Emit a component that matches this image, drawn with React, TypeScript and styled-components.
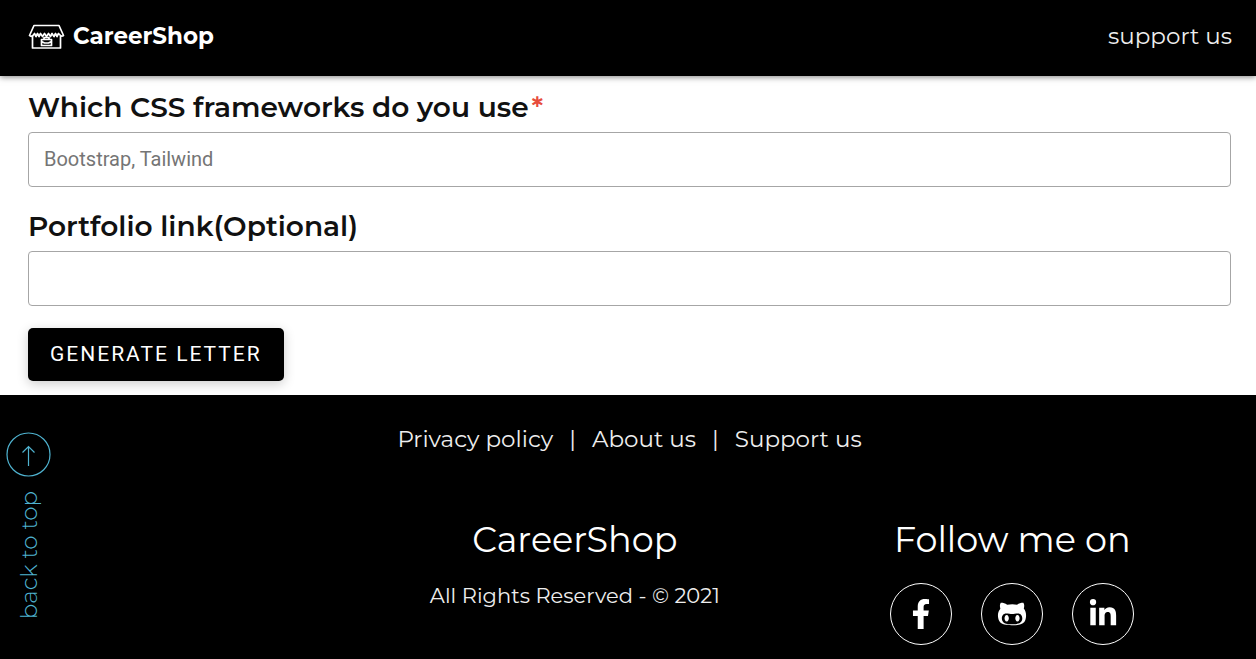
import React from "react";
import styled, { createGlobalStyle } from "styled-components";
import { FaFacebookF, FaGithubAlt, FaLinkedinIn } from "react-icons/fa";

const GlobalStyle = createGlobalStyle`
  *, *::before, *::after { box-sizing: border-box; }
  body {
    margin: 0;
    background: #fff;
    color: #111;
    font-family: Montserrat, Inter, "Open Sans", sans-serif;
  }
  a { color: inherit; text-decoration: none; }
`;

const Header = styled.header`
  position: relative;
  display: flex;
  align-items: center;
  justify-content: space-between;
  height: 76px;
  padding: 0 24px 4px 28px;
  background: #000;
  color: #fff;
  box-shadow: 0 1px 6px rgba(0, 0, 0, 0.5);
`;

const Brand = styled.a`
  display: flex;
  align-items: center;
  gap: 8px;
  font-size: 23px;
  line-height: 32px;
  font-weight: 700;
`;

const TextLink = styled.a`
  font-size: 23px;
  line-height: 32px;
  color: #eee;
`;

const Form = styled.form`
  display: flex;
  flex-direction: column;
  align-items: flex-start;
  gap: 20px;
  padding: 12px 25px 14px 28px;
`;

const Field = styled.div`
  display: flex;
  flex-direction: column;
  gap: 6px;
  width: 100%;
`;

const Label = styled.label`
  font-size: 28px;
  line-height: 38px;
  font-weight: 600;
`;

const Required = styled.span`
  margin-left: 3px;
  color: #e74c3c;
`;

const TextInput = styled.input`
  width: 100%;
  height: 55px;
  padding: 0 15px 2px;
  border: 1px solid #a6a6a6;
  border-radius: 4px;
  background: #fff;
  color: #111;
  font-family: Roboto, sans-serif;
  font-size: 20px;
  &::placeholder { color: #757575; opacity: 1; }
`;

const SubmitButton = styled.button`
  height: 53px;
  margin-top: 2px;
  padding: 0 22px 2px;
  border: 0;
  border-radius: 5px;
  background: #000;
  color: #fff;
  font-family: Roboto, sans-serif;
  font-size: 21px;
  letter-spacing: 2px;
  text-transform: uppercase;
  box-shadow: 0 3px 12px rgba(0, 0, 0, 0.2);
`;

const Footer = styled.footer`
  position: relative;
  padding: 28px 25px 14px 28px;
  background: #000;
  color: #fff;
`;

const FooterNav = styled.nav`
  display: flex;
  justify-content: center;
  gap: 16px;
  font-size: 23px;
  line-height: 32px;
  color: #eee;
`;

const FooterColumns = styled.div`
  display: grid;
  grid-template-columns: 3fr 4fr 4fr;
  margin-top: 60px;
`;

const FooterColumn = styled.section<{ $start: number }>`
  grid-column: ${(p) => p.$start};
  display: flex;
  flex-direction: column;
  align-items: center;
  gap: 18px;
`;

const FooterTitle = styled.h2`
  margin: 0;
  font-size: 35px;
  line-height: 50px;
  font-weight: 400;
`;

const Copyright = styled.p`
  margin: 0;
  font-size: 21px;
  line-height: 26px;
  color: #eee;
`;

const SocialLinks = styled.div`
  display: flex;
  gap: 29px;
`;

const SocialLink = styled.a`
  display: flex;
  align-items: center;
  justify-content: center;
  width: 62px;
  height: 62px;
  border: 1px solid #fff;
  border-radius: 50%;
`;

const BackToTop = styled.a`
  position: absolute;
  left: 6px;
  top: 37px;
  display: flex;
  flex-direction: column;
  align-items: center;
  gap: 14px;
  color: #4fb3d0;
`;

const VerticalText = styled.span`
  writing-mode: vertical-rl;
  transform: rotate(180deg);
  font-size: 23px;
  line-height: 32px;
  font-weight: 300;
`;

const ShopIcon = () => (
  <svg width="37" height="27" viewBox="0 0 37 27" fill="none" stroke="#fff" strokeWidth="1.700" strokeLinejoin="round" aria-hidden="true">
    <path d="M6 2.500H31L35.500 12.500Q33.500 14 32 12L30.500 10.500L29 13.500L27.500 10.500L26 13.500L24 10.500L22.500 13.500L20.500 10.500L18.500 13.500L16.500 10.500L14.500 13.500L12.500 10.500L11 13.500L9.500 10.500L8 13.500L6.500 10.500L5 12.500Q3 14 1.500 12.500Z" />
    <path d="M4.500 13V25H32.500V13" />
    <path d="M13.500 16.500H23.500V22.500H13.500ZM16 16.500V14.500H21V16.500M13.500 18.500L16.500 20H20.500L23.500 18.500" />
  </svg>
);

const ArrowIcon = () => (
  <svg width="45" height="45" viewBox="0 0 45 45" fill="none" stroke="currentColor" strokeWidth="1.200" aria-hidden="true">
    <circle cx="22.500" cy="22.500" r="21.500" />
    <path d="M22.500 34V14.500M16.500 20.500L22.500 14.500L28.500 20.500" />
  </svg>
);

export default function App() {
  return (
    <>
      <GlobalStyle />
      <Header id="top">
        <Brand href="#top">
          <ShopIcon />
          CareerShop
        </Brand>
        <TextLink href="#support">support us</TextLink>
      </Header>
      <main>
        <Form onSubmit={(e) => e.preventDefault()}>
          <Field>
            <Label htmlFor="frameworks">
              Which CSS frameworks do you use<Required>*</Required>
            </Label>
            <TextInput id="frameworks" type="text" placeholder="Bootstrap, Tailwind" required />
          </Field>
          <Field>
            <Label htmlFor="portfolio">Portfolio link(Optional)</Label>
            <TextInput id="portfolio" type="text" />
          </Field>
          <SubmitButton type="submit">Generate letter</SubmitButton>
        </Form>
      </main>
      <Footer>
        <BackToTop href="#top">
          <ArrowIcon />
          <VerticalText>back to top</VerticalText>
        </BackToTop>
        <FooterNav>
          <a href="#privacy">Privacy policy</a>
          <span>|</span>
          <a href="#about">About us</a>
          <span>|</span>
          <a href="#support">Support us</a>
        </FooterNav>
        <FooterColumns>
          <FooterColumn $start={2}>
            <FooterTitle>CareerShop</FooterTitle>
            <Copyright>All Rights Reserved - © 2021</Copyright>
          </FooterColumn>
          <FooterColumn $start={3}>
            <FooterTitle>Follow me on</FooterTitle>
            <SocialLinks>
              <SocialLink href="#facebook" aria-label="Facebook">
                <FaFacebookF size={30} />
              </SocialLink>
              <SocialLink href="#github" aria-label="GitHub">
                <FaGithubAlt size={30} />
              </SocialLink>
              <SocialLink href="#linkedin" aria-label="LinkedIn">
                <FaLinkedinIn size={30} />
              </SocialLink>
            </SocialLinks>
          </FooterColumn>
        </FooterColumns>
      </Footer>
    </>
  );
}
